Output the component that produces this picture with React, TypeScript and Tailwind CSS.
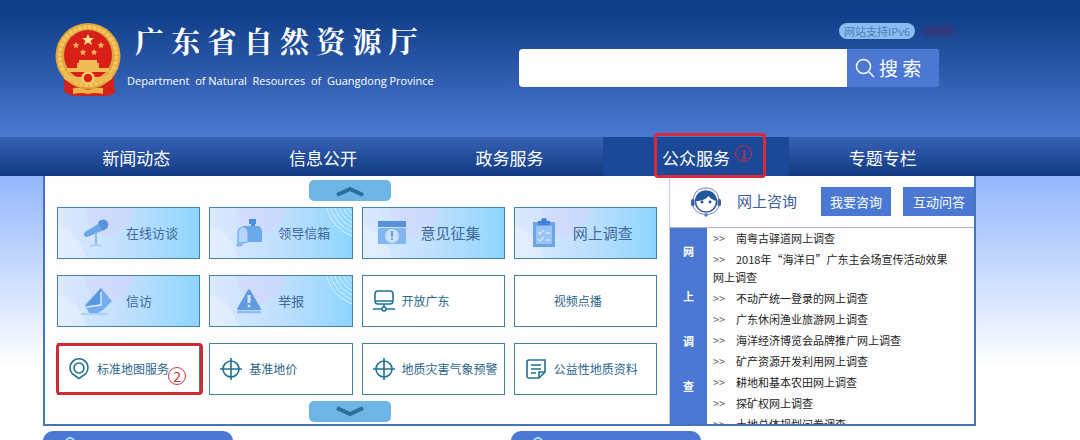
import React from "react"

type Tile = {
  label: string
  icon?: React.ReactNode
  filled?: boolean
  large?: boolean
  rings?: boolean
  mark?: boolean
}

const line = {
  fill: "none",
  stroke: "#1f7190",
  strokeWidth: 1.6,
}

const Microphone = () => (
  <svg viewBox="0 0 28 32" className="h-8 w-7">
    <path d="M2 15 17 6l4 7L4 20c-3 0-4-3-2-5Z" fill="#6aa6e8" />
    <path d="M15 6c2-5 9-4 10 0s-2 8-6 7Z" fill="#5a92de" />
    <path d="M13 15v13" stroke="#8bbcf2" strokeWidth="2" />
    <path d="M8 29q5-2 10 0" stroke="#a5cbf5" strokeWidth="1.5" fill="none" />
  </svg>
)

const Mailbox = () => (
  <svg viewBox="0 0 28 32" className="h-8 w-7">
    <path d="M14 2h7v5h-1v4h-4V7h-2Z" fill="#4f8de0" />
    <path d="M8 9h14a5 5 0 0 1 5 5v11H8Z" fill="#6aa9ec" />
    <path d="M3 26V15a5 5 0 0 1 10 0v10Z" fill="#b7d5fb" stroke="#71a8ea" strokeWidth="1.2" />
    <path d="M1 29c0-3 5-5 10-4l-6 5Z" fill="#83b8f0" />
  </svg>
)

const CalendarClock = () => (
  <svg viewBox="0 0 30 26" className="h-[26px] w-[30px]">
    <path d="M1 1h28v6H1Z" fill="#5592dc" />
    <path d="M1 8h28v16H1Z" fill="#82b6f1" />
    <circle cx="15" cy="16" r="7" fill="#c9e1fd" />
    <path d="M15 11v6" stroke="#5a86cc" strokeWidth="1.6" />
    <circle cx="15" cy="19" r="1" fill="#5a86cc" />
  </svg>
)

const Clipboard = () => (
  <svg viewBox="0 0 24 30" className="h-[30px] w-6">
    <path d="M1 4h22v25H1Z" fill="#6ba5e6" />
    <path d="M4 8h16v18H4Z" fill="#96c2f6" />
    <path d="M6 3h3a3 3 0 0 1 6 0h3v4H6Z" fill="#4382d6" />
    <path d="m6 14 2 2 4-4M14 15h4M6 21l2 2 4-4M14 22h4" stroke="#d3e6fd" strokeWidth="1.4" fill="none" />
  </svg>
)

const Boat = () => (
  <svg viewBox="0 0 32 28" className="h-7 w-8">
    <path d="m20 1 11 13-9 9-5 3H8L4 18Z" fill="#73adee" />
    <path d="M20 1v16L5 19Z" fill="#5a97e2" />
    <path d="M20 5v13L6 20" stroke="#d5e8ff" strokeWidth="1.5" fill="none" />
    <path d="M0 27h27" stroke="#a3c8f4" strokeWidth="1.5" />
  </svg>
)

const Warning = () => (
  <svg viewBox="0 0 26 28" className="h-7 w-[26px]">
    <path d="m13 3 11 19H2Z" fill="#5f9ddf" stroke="#5f9ddf" strokeWidth="2" strokeLinejoin="round" />
    <path d="M13 8v8" stroke="#cfe5ff" strokeWidth="3" />
    <circle cx="13" cy="19" r="1.5" fill="#cfe5ff" />
    <path d="M1 25h24" stroke="#8dbdf2" strokeWidth="2.5" />
  </svg>
)

const Network = () => (
  <svg viewBox="0 0 22 22" className="h-[22px] w-[22px]" {...line}>
    <rect x="2" y="1" width="18" height="13" rx="3" />
    <path d="M3 11h16M11 14v3M0 19h9M13 19h9" />
    <circle cx="11" cy="19" r="2" />
  </svg>
)

const MapPin = () => (
  <svg viewBox="0 0 22 22" className="h-[22px] w-[22px]" {...line}>
    <path d="M11 20.500 4.500 16A9 9 0 1 1 17.500 16Z" />
    <circle cx="11" cy="10" r="5" />
  </svg>
)

const Target = () => (
  <svg viewBox="0 0 22 22" className="h-[22px] w-[22px]" {...line}>
    <circle cx="11" cy="11" r="8" />
    <path d="M11 0v22M0 11h22" />
  </svg>
)

const Note = () => (
  <svg viewBox="0 0 22 22" className="h-[22px] w-[22px]" {...line}>
    <path d="M4 2h16v12l-6 6H4q-2 0-2-2V4q0-2 2-2Z" />
    <path d="M14 20v-6h6M6 7h10M6 11h10M6 15h5" />
  </svg>
)

const HeadsetFace = () => (
  <svg viewBox="0 0 30 30" className="h-[30px] w-[30px] shrink-0">
    <circle cx="15" cy="14.500" r="10.500" fill="#fff" stroke="#3a5fa0" strokeWidth="1.500" />
    <path d="M4.500 14C5 7 9 4 15 4s10 4 10.500 10c-3-1-6-2-8-5-2 3-7 5-13 5Z" fill="#23589b" />
    <path d="M2 13C3 5 8 1 15 1s12 4 13 12" fill="none" stroke="#5f7fb6" />
    <rect x="0" y="12" width="3.500" height="7" rx="1.500" fill="#3f62a3" />
    <rect x="26.500" y="12" width="3.500" height="7" rx="1.500" fill="#3f62a3" />
    <path d="M2 19c2 5 6 8.500 13 8.500S26 24 28 19" fill="none" stroke="#5f7fb6" />
    <circle cx="11" cy="15" r="1.400" fill="#234f91" />
    <circle cx="19" cy="15" r="1.400" fill="#234f91" />
    <circle cx="15" cy="28" r="1.700" fill="#5478bb" />
  </svg>
)

const Emblem = () => (
  <svg viewBox="0 0 66 74" className="h-[74px] w-[66px] shrink-0">
    <path d="M9 48h49l2 22q-6 4-13 3H21q-7 0-12-5Z" fill="#d3211c" />
    <ellipse cx="33" cy="33" rx="32.500" ry="33" fill="#e0a53f" />
    <ellipse cx="33" cy="33" rx="28.500" ry="29" fill="none" stroke="#f4c860" strokeWidth="4" strokeDasharray="4 1" />
    <ellipse cx="33" cy="32" rx="24" ry="25" fill="#d92018" />
    <path d="m33 11 1.800 4h4.200l-3.300 2.800 1.300 4.200-4-2.500-4 2.500 1.300-4.200-3.300-2.800h4.200Z" fill="#ffe18a" />
    <path
      d="m21 19 1 2 2 .3-1.500 1.600.4 2.300-1.900-1.200-2 1.200.5-2.300-1.500-1.600 2-.3ZM46 19l1 2 2 .3-1.500 1.600.4 2.300-1.900-1.200-2 1.200.5-2.300-1.500-1.600 2-.3ZM28 26l1 2 2 .3-1.500 1.600.4 2.300-1.900-1.200-2 1.200.5-2.300-1.500-1.600 2-.3ZM39 26l1 2 2 .3-1.500 1.600.4 2.300-1.900-1.200-2 1.200.5-2.300-1.500-1.600 2-.3Z"
      fill="#f6b95a"
    />
    <path d="M24 37h18v3h2v5h10v4H12v-4h10v-5h2Z" fill="#efbb55" />
    <path d="M7 46q12 12 26 6 14 6 26-6l-2 10q-12 7-24 1-12 6-24-1Z" fill="#edbb50" />
    <circle cx="33" cy="55" r="5.500" fill="#d92018" stroke="#f4cc67" strokeWidth="2.500" />
    <path d="M18 65q8-1 15 2 7-3 15-2v6q-8-2-15 0-7-2-15 0Z" fill="#edb34b" />
  </svg>
)

const tiles: Tile[] = [
  { label: "在线访谈", icon: <Microphone />, filled: true },
  { label: "领导信箱", icon: <Mailbox />, filled: true, rings: true },
  { label: "意见征集", icon: <CalendarClock />, filled: true, large: true },
  { label: "网上调查", icon: <Clipboard />, filled: true, large: true },
  { label: "信访", icon: <Boat />, filled: true },
  { label: "举报", icon: <Warning />, filled: true, rings: true },
  { label: "开放广东", icon: <Network /> },
  { label: "视频点播" },
  { label: "标准地图服务", icon: <MapPin />, mark: true },
  { label: "基准地价", icon: <Target /> },
  { label: "地质灾害气象预警", icon: <Target /> },
  { label: "公益性地质资料", icon: <Note /> },
]

const navItems = ["新闻动态", "信息公开", "政务服务", "公众服务", "专题专栏"]

const surveys = [
  "南粤古驿道网上调查",
  "2018年“海洋日”广东主会场宣传活动效果网上调查",
  "不动产统一登录的网上调查",
  "广东休闲渔业旅游网上调查",
  "海洋经济博览会品牌推广网上调查",
  "矿产资源开发利用网上调查",
  "耕地和基本农田网上调查",
  "探矿权网上调查",
  "土地总体规划问卷调查",
]

const TileBackdrop = ({ rings }: { rings?: boolean }) => (
  <svg viewBox="0 0 142 50" preserveAspectRatio="none" className="absolute inset-0 h-full w-full">
    <path d="M0 18Q22 24 28 50H0Z" fill="#fff" opacity=".25" />
    <path d="M26 0h51Q70 25 49 28 31 26 26 0Z" fill="#d5d6fa" opacity=".55" />
    {rings && (
      <g fill="none" stroke="#d8f1ff" strokeWidth="1">
        <circle cx="156" cy="-10" r="20" />
        <circle cx="156" cy="-10" r="24" />
        <circle cx="156" cy="-10" r="28" />
        <circle cx="156" cy="-10" r="32" />
        <circle cx="156" cy="-10" r="36" />
        <circle cx="156" cy="-10" r="40" />
      </g>
    )}
  </svg>
)

const ServiceTile = ({ label, icon, filled, large, rings, mark }: Tile) => (
  <a
    href="#"
    className={`relative flex h-[52px] items-center border ${
      filled
        ? "border-[#4683a6] bg-linear-to-r from-[#dce9ff] via-[#bfe0ff] to-[#8dd5fd] text-[#41699a]"
        : "border-[#44809a] bg-white text-[#2a658c]"
    }`}
  >
    {filled && <TileBackdrop rings={rings} />}
    {filled ? (
      <>
        <span className={`relative flex w-[58px] justify-center ${large ? "" : "ml-[10px]"}`}>{icon}</span>
        <span className={`relative whitespace-nowrap ${large ? "text-[15px]" : "text-[13px]"}`}>{label}</span>
      </>
    ) : (
      <>
        <span className="ml-[10px] flex w-[29px]">{icon}</span>
        <span className="text-xs whitespace-nowrap">{label}</span>
      </>
    )}
    {mark && (
      <span className="absolute -top-px -right-1 -bottom-px -left-[2px] rounded-sm border-[3px] border-[#cb2b31]">
        <span className="absolute right-[14px] bottom-[7px] flex h-[18px] w-[18px] items-center justify-center rounded-full border border-[#c9383c] text-sm leading-none text-[#c9383c]">
          2
        </span>
      </span>
    )}
  </a>
)

const ScrollButton = ({ down }: { down?: boolean }) => (
  <button
    type="button"
    aria-label={down ? "向下" : "向上"}
    className="ml-[252px] flex h-[21px] w-[82px] items-center justify-center rounded-[5px] bg-[#6db5e5]"
  >
    <svg viewBox="0 0 28 12" className="h-3 w-7" fill="none" stroke="#28709a" strokeWidth="4">
      <path d={down ? "m1 2 13 6 13-6" : "m1 10 13-6 13 6"} />
    </svg>
  </button>
)

const Header = () => (
  <header className="bg-linear-to-b from-[#0f3f89] from-10% to-[#4b79d3]">
    <div className="mr-[104px] ml-[43px] flex h-[137px] items-start justify-between">
      <div className="flex pt-[23px] pl-3">
        <Emblem />
        <div className="pl-[6px] text-white">
          <h1 className="pl-2 font-['Noto_Serif_CJK_SC','Noto_Sans_CJK_SC',serif] text-[29px] leading-9 font-bold whitespace-nowrap">
            广 东 省 自 然 资 源 厅
          </h1>
          <p className="mt-3 font-['Open_Sans',sans-serif] text-[11px] leading-5 whitespace-pre">
            Department  of Natural  Resources  of  Guangdong Province
          </p>
        </div>
      </div>
      <div className="flex flex-col pt-[23px] pr-[37px]">
        <div className="-mr-4 flex items-center justify-end gap-2">
          <span className="h-4 rounded-full bg-[#8dbcf0] px-[5px] text-[11px] leading-4 text-[#527fb5]">
            网站支持IPv6
          </span>
          <span className="h-[10px] w-8 rounded-full bg-[#3d346f] opacity-70 blur-[2px]" />
        </div>
        <form className="mt-[10px] flex h-[38px]">
          <input aria-label="搜索" className="w-[328px] rounded-l-[4px] bg-white px-3 outline-none" />
          <button type="button" className="flex w-[92px] items-center gap-1 rounded-r-xs bg-[#4a78d3] pl-2 text-white">
            <svg viewBox="0 0 20 20" className="h-5 w-5" fill="none" stroke="white" strokeWidth="1.500">
              <circle cx="8.500" cy="8.500" r="7" />
              <path d="m14 14 5 5" />
            </svg>
            <span className="text-[19px] leading-6">搜 索</span>
          </button>
        </form>
      </div>
    </div>
  </header>
)

const MainNav = () => (
  <nav className="bg-linear-to-b from-[#3762b5] to-[#113a82]">
    <div className="mr-[104px] ml-[43px] grid h-[39px] grid-cols-5">
      {navItems.map((item) => {
        const active = item === "公众服务"
        return (
          <a
            key={item}
            href="#"
            className={`relative flex items-center justify-center pt-[2px] text-[17px] text-white ${active ? "bg-[#1b4897]" : ""}`}
          >
            {item}
            {active && (
              <span className="absolute -top-1 -bottom-[2px] left-[51px] w-[112px] rounded-sm border-[3px] border-[#d92a3a]">
                <span className="absolute top-[9px] right-[11px] flex h-[17px] w-[17px] items-center justify-center rounded-full border border-[#d22c45] text-xs leading-none text-[#d22c45]">
                  1
                </span>
              </span>
            )}
          </a>
        )
      })}
    </div>
  </nav>
)

const ConsultPanel = () => (
  <aside className="flex min-w-0 flex-1 flex-col border-l border-[#c3cde4]">
    <div className="flex h-[52px] shrink-0 items-center overflow-hidden border-b border-[#a9b4c6] pl-[21px]">
      <HeadsetFace />
      <h2 className="ml-4 text-[15px] whitespace-nowrap text-[#3d5f9c]">网上咨询</h2>
      <button type="button" className="ml-6 h-[29px] w-[70px] shrink-0 bg-[#4a78d3] text-[13px] text-white">
        我要咨询
      </button>
      <button type="button" className="ml-3 h-[29px] w-[72px] shrink-0 bg-[#4a78d3] text-[13px] text-white">
        互动问答
      </button>
    </div>
    <div className="flex min-h-0 flex-1">
      <div className="flex w-[37px] shrink-0 flex-col items-center gap-[29px] bg-[#4a78d3] pt-[15px] text-[11px] leading-4 font-bold text-white">
        {["网", "上", "调", "查"].map((c) => (
          <span key={c}>{c}</span>
        ))}
      </div>
      <ul className="flex h-[196px] flex-1 flex-col gap-[3px] overflow-hidden pt-px pr-5 pl-[6px] text-[11px] leading-[18px] text-[#252525]">
        {surveys.map((s) => (
          <li key={s} className="shrink-0">
            <span className="inline-block w-[23px] text-[#666]">&gt;&gt;</span>
            <a href="#">{s}</a>
          </li>
        ))}
      </ul>
    </div>
  </aside>
)

const SectionTab = () => (
  <div className="h-8 w-[190px] rounded-[10px] bg-[#4a78d3] pt-[5px] pl-[19px]">
    <svg viewBox="0 0 16 16" className="h-4 w-4" fill="none" stroke="#b9d3ff" strokeWidth="2">
      <circle cx="8" cy="6" r="4" />
      <path d="M1 16q7-9 14 0" />
    </svg>
  </div>
)

export default function App() {
  return (
    <div className="h-screen overflow-hidden bg-white font-['Noto_Sans_CJK_SC',sans-serif]">
      <Header />
      <MainNav />
      <div className="bg-linear-to-b from-[#94b6fb] to-white to-[190px]">
        <main className="mr-[104px] ml-[43px] flex h-[250px] border-2 border-t-0 border-[#4773b8] bg-[#fdfdfd]">
          <section className="mr-3 ml-3 w-[600px] shrink-0 pt-1">
            <ScrollButton />
            <div className="mt-[6px] mb-[6px] grid grid-cols-4 gap-x-[9px] gap-y-4">
              {tiles.map((t) => (
                <ServiceTile key={t.label} {...t} />
              ))}
            </div>
            <ScrollButton down />
          </section>
          <ConsultPanel />
        </main>
      </div>
      <div className="bg-white pt-[5px]">
        <div className="ml-[43px] flex gap-[278px]">
          <SectionTab />
          <SectionTab />
        </div>
      </div>
    </div>
  )
}
